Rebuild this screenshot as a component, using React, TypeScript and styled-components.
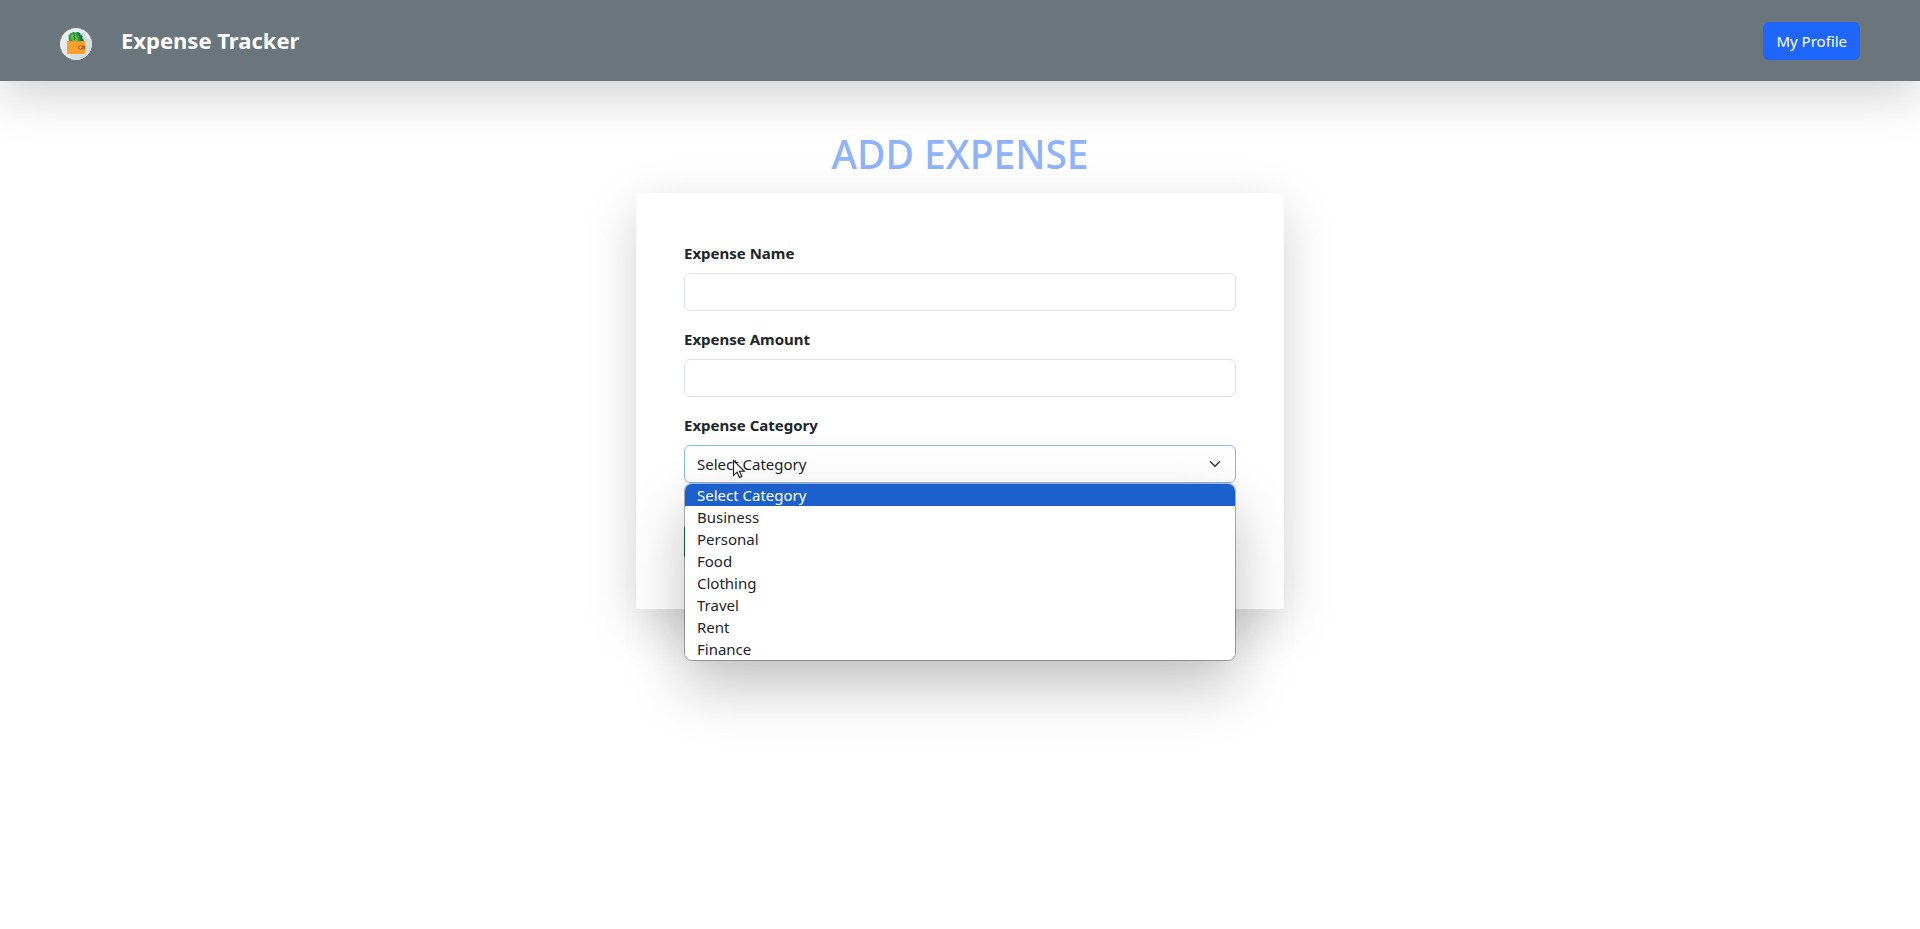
import React from "react";
import styled, { createGlobalStyle } from "styled-components";

const GlobalStyle = createGlobalStyle`
  *, *::before, *::after { box-sizing: border-box; }
  body {
    margin: 0;
    background: #fff;
    color: #212529;
    font-family: "Noto Sans", "Open Sans", sans-serif;
    font-size: 15px;
    line-height: 24px;
  }
`;

const Page = styled.div`
  min-height: 100vh;
`;

const Header = styled.header`
  display: flex;
  align-items: center;
  padding: 20px 60px 19px;
  min-height: 81px;
  background: #6b757c;
  box-shadow: 0 16px 48px rgba(0, 0, 0, 0.175);
`;

const Brand = styled.a`
  display: flex;
  align-items: center;
  gap: 29px;
  color: #fff;
  text-decoration: none;
`;

const Logo = styled.svg`
  width: 32px;
  height: 32px;
  margin-top: 6px;
`;

const BrandName = styled.span`
  padding-bottom: 2px;
  font-size: 22px;
  font-weight: 700;
  line-height: 32px;
`;

const Button = styled.button<{ $tone: "primary" | "success" }>`
  display: block;
  min-width: 80px;
  height: 38px;
  padding: 0 13px;
  border: 0;
  border-radius: 6px;
  background: ${({ $tone }) => ($tone === "primary" ? "#1f66fd" : "#198754")};
  color: #fff;
  font: inherit;
  cursor: pointer;
`;

const ProfileSlot = styled.nav`
  margin-left: auto;
`;

const Container = styled.main`
  display: flex;
  flex-direction: column;
  align-items: center;
  max-width: 1320px;
  margin: 0 auto;
  padding: 49px 12px 48px;
`;

const Title = styled.h1`
  margin: 0 0 15px;
  color: #8fb2fd;
  font-size: 39px;
  font-weight: 500;
  line-height: 48px;
  text-transform: uppercase;
`;

const Card = styled.form`
  width: 50%;
  min-width: 320px;
  padding: 48px;
  background: #fff;
  box-shadow: 0 16px 48px rgba(0, 0, 0, 0.175);
`;

const Fields = styled.div`
  display: flex;
  flex-direction: column;
  gap: 16px;
  margin-bottom: 40px;
`;

const Field = styled.div`
  display: flex;
  flex-direction: column;
  gap: 8px;
`;

const Label = styled.label`
  font-weight: 700;
`;

const Input = styled.input`
  height: 38px;
  width: 100%;
  padding: 0 12px;
  border: 1px solid #dee2e6;
  border-radius: 6px;
  background: #fff;
  color: inherit;
  font: inherit;
`;

const SelectBox = styled.div`
  position: relative;
`;

const Select = styled.select`
  display: block;
  width: 100%;
  height: 38px;
  padding: 0 36px 0 12px;
  border: 1px solid #86b7fe;
  border-radius: 6px;
  background: #fff;
  color: inherit;
  font: inherit;
  appearance: none;
  outline: 0;
`;

const Chevron = styled.svg`
  position: absolute;
  top: 13px;
  right: 13px;
  width: 16px;
  height: 12px;
  pointer-events: none;
`;

const Options = styled.ul`
  position: absolute;
  top: 100%;
  left: 0;
  right: 0;
  z-index: 1;
  margin: 0;
  padding: 0;
  overflow: hidden;
  list-style: none;
  border: 1px solid rgba(0, 0, 0, 0.3);
  border-radius: 8px;
  background: #fff padding-box;
  box-shadow: 0 26px 58px rgba(0, 0, 0, 0.24);
`;

const Option = styled.li<{ $active: boolean }>`
  padding: 0 12px;
  line-height: 22px;
  background: ${({ $active }) => ($active ? "#1c60ce" : "#fff")};
  color: ${({ $active }) => ($active ? "#fff" : "inherit")};
`;

const Pointer = styled.svg`
  position: absolute;
  top: 14px;
  left: 48px;
  z-index: 2;
  width: 14px;
  height: 20px;
  pointer-events: none;
`;

const categories = ["Select Category", "Business", "Personal", "Food", "Clothing", "Travel", "Rent", "Finance"];

function WalletLogo() {
  return (
    <Logo viewBox="0 0 32 32" aria-hidden="true">
      <circle cx="16" cy="16" r="16" fill="#e8eef0" />
      <path d="M22 5 31.500 14.500A16 16 0 0 1 16 32L8 26Z" fill="#d5dfe0" />
      <path d="m13 4 2 1 3-1 2 1 1 2 2 1-1 2 2 2-1 2H12Z" fill="#087b43" />
      <path d="m8.500 9 1-3 2-1 2-1 3 1 2 1 1 3 1 4H9Z" fill="#2b9a3b" />
      <path d="m11 7 4-1 2 2 1 5h-6l-1-3Z" fill="#6fbd45" />
      <path d="M15.500 7.500c-2-.5-2.500 1.500-1 2s1 2-1 1.500M14.300 6.500v5.500" fill="none" stroke="#168238" strokeWidth="0.900" />
      <rect x="7" y="13" width="18" height="13" rx="1" fill="#ff9f2d" />
      <path d="M8 13h16l1 1H7Z" fill="#f28b20" />
      <path d="M20 17.500h5.500v4H20a2 2 0 0 1 0-4Z" fill="#c86820" />
      <circle cx="20.500" cy="19.500" r="1" fill="#f6c38b" />
    </Logo>
  );
}

export default function App() {
  return (
    <Page>
      <GlobalStyle />
      <Header>
        <Brand href="#">
          <WalletLogo />
          <BrandName>Expense Tracker</BrandName>
        </Brand>
        <ProfileSlot>
          <Button type="button" $tone="primary">My Profile</Button>
        </ProfileSlot>
      </Header>
      <Container>
        <Title>Add Expense</Title>
        <Card>
          <Fields>
            <Field>
              <Label htmlFor="name">Expense Name</Label>
              <Input id="name" type="text" />
            </Field>
            <Field>
              <Label htmlFor="amount">Expense Amount</Label>
              <Input id="amount" type="text" inputMode="decimal" />
            </Field>
            <Field>
              <Label htmlFor="category">Expense Category</Label>
              <SelectBox>
                <Select id="category" defaultValue={categories[0]}>
                  {categories.map((name) => (
                    <option key={name}>{name}</option>
                  ))}
                </Select>
                <Chevron viewBox="0 0 16 16" aria-hidden="true">
                  <path d="m2 5 6 6 6-6" fill="none" stroke="#343a40" strokeWidth="2" strokeLinecap="round" strokeLinejoin="round" />
                </Chevron>
                <Options role="listbox" aria-label="Expense Category">
                  {categories.map((name, index) => (
                    <Option key={name} role="option" aria-selected={index === 0} $active={index === 0}>
                      {name}
                    </Option>
                  ))}
                </Options>
                <Pointer viewBox="0 0 14 20" aria-hidden="true">
                  <path d="M1.500 1.500v15l3.500-3.300 2.500 5.300 2.300-1-2.400-5.200h5Z" fill="#fff" stroke="#1a1a22" strokeWidth="1.100" />
                </Pointer>
              </SelectBox>
            </Field>
          </Fields>
          <Button type="submit" $tone="success" aria-label="Add expense" />
        </Card>
      </Container>
    </Page>
  );
}
